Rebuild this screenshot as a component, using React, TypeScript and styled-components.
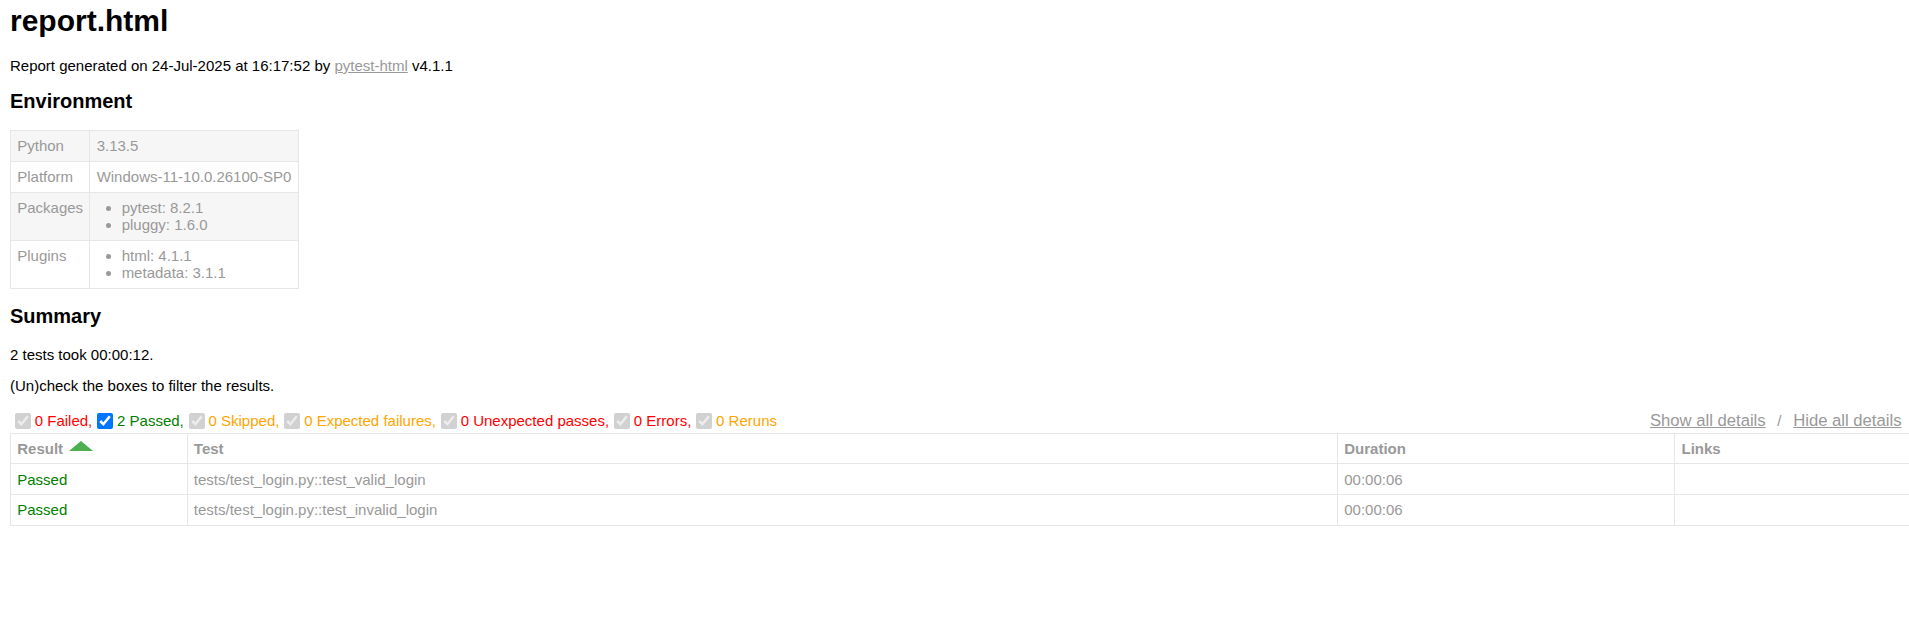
import React from "react";
import styled, { createGlobalStyle } from "styled-components";

const GlobalStyle = createGlobalStyle`
  html, body {
    margin: 0;
    padding: 0;
    background: #fff;
    overflow: hidden;
  }
  body {
    font-family: "Liberation Sans", Arial, Helvetica, sans-serif;
    font-size: 15px;
    color: #999;
  }
`;

const Page = styled.div`
  padding: 4px 0 20px 10px;
  overflow: hidden;
`;

const Title = styled.h1`
  margin: 0;
  font-size: 30px;
  line-height: 34px;
  font-weight: bold;
  color: #000;
`;

const Para = styled.p<{ $mt: number }>`
  margin: ${(p) => p.$mt}px 0 0;
  font-size: 15px;
  line-height: 17px;
  color: #000;
`;

const Link = styled.a`
  color: #999;
  text-decoration: underline;
`;

const Heading = styled.h2<{ $mt: number }>`
  margin: ${(p) => p.$mt}px 0 0;
  font-size: 20px;
  line-height: 23px;
  font-weight: bold;
  color: #000;
`;

const EnvTable = styled.table`
  margin-top: 17px;
  border-collapse: collapse;
  font-size: 15px;
  line-height: 17.25px;
  color: #999;
`;

const EnvRow = styled.tr`
  &:nth-child(odd) {
    background-color: #f6f6f6;
  }
`;

const EnvCell = styled.td`
  padding: 6.25px;
  border: 1px solid #e6e6e6;
  vertical-align: top;
  text-align: left;
`;

const EnvList = styled.ul`
  margin: 0;
  padding: 0 25px;
`;

const Controls = styled.div`
  margin-top: 15px;
  display: flex;
  justify-content: space-between;
  align-items: center;
`;

const Filters = styled.div`
  display: flex;
  align-items: center;
  font-size: 15px;
  line-height: 17.25px;
`;

const FilterBox = styled.input`
  width: 16px;
  height: 16px;
  margin: 3.75px 3.75px 3.75px 5px;
`;

const FilterLabel = styled.span<{ $c: string }>`
  color: ${(p) => p.$c};
`;

const Collapse = styled.div`
  display: flex;
  align-items: center;
  font-size: 16.67px;
  color: #999;
`;

const CollapseButton = styled.button`
  font-family: "Liberation Sans", Arial, sans-serif;
  font-size: 16.67px;
  color: #999;
  background: none;
  border: none;
  padding: 1.25px 7.5px;
  text-decoration: underline;
  cursor: pointer;
`;

const Sep = styled.span`
  font-size: 15px;
`;

const ResultsTable = styled.table`
  width: calc(100% + 4px);
  border-collapse: collapse;
  table-layout: fixed;
  font-size: 15px;
  line-height: 17.25px;
  color: #999;
`;

const Col = styled.col<{ $w: number }>`
  width: ${(p) => p.$w}px;
`;

const HeadCell = styled.th`
  padding: 6.25px;
  border: 1px solid #e6e6e6;
  text-align: left;
  font-weight: bold;
`;

const SortArrow = styled.span`
  display: inline-block;
  width: 0;
  height: 0;
  margin-left: 6px;
  vertical-align: 3px;
  border-left: 12px solid transparent;
  border-right: 12px solid transparent;
  border-bottom: 10.5px solid #4caf50;
`;

const Cell = styled.td<{ $c?: string }>`
  padding: 6.25px;
  border: 1px solid #e6e6e6;
  text-align: left;
  color: ${(p) => p.$c || "#999"};
`;

const env: [string, string | string[]][] = [
  ["Python", "3.13.5"],
  ["Platform", "Windows-11-10.0.26100-SP0"],
  ["Packages", ["pytest: 8.2.1", "pluggy: 1.6.0"]],
  ["Plugins", ["html: 4.1.1", "metadata: 3.1.1"]],
];

const filters = [
  { label: "0 Failed,", color: "#ff0000", disabled: true },
  { label: "2 Passed,", color: "#008000", disabled: false },
  { label: "0 Skipped,", color: "#ffa500", disabled: true },
  { label: "0 Expected failures,", color: "#ffa500", disabled: true },
  { label: "0 Unexpected passes,", color: "#ff0000", disabled: true },
  { label: "0 Errors,", color: "#ff0000", disabled: true },
  { label: "0 Reruns", color: "#ffa500", disabled: true },
];

const results = [
  { test: "tests/test_login.py::test_valid_login", duration: "00:00:06" },
  { test: "tests/test_login.py::test_invalid_login", duration: "00:00:06" },
];

export default function App() {
  return (
    <>
      <GlobalStyle />
      <Page>
        <Title>report.html</Title>
        <Para $mt={19}>
          Report generated on 24-Jul-2025 at 16:17:52 by <Link href="#">pytest-html</Link> v4.1.1
        </Para>
        <Heading $mt={16}>Environment</Heading>
        <EnvTable>
          <tbody>
            {env.map(([k, v]) => (
              <EnvRow key={k}>
                <EnvCell>{k}</EnvCell>
                <EnvCell>
                  {Array.isArray(v) ? (
                    <EnvList>
                      {v.map((item) => (
                        <li key={item}>{item}</li>
                      ))}
                    </EnvList>
                  ) : (
                    v
                  )}
                </EnvCell>
              </EnvRow>
            ))}
          </tbody>
        </EnvTable>
        <Heading $mt={16}>Summary</Heading>
        <Para $mt={18}>2 tests took 00:00:12.</Para>
        <Para $mt={14.5}>(Un)check the boxes to filter the results.</Para>
        <Controls>
          <Filters>
            {filters.map((f) => (
              <React.Fragment key={f.label}>
                <FilterBox type="checkbox" defaultChecked disabled={f.disabled} />
                <FilterLabel $c={f.color}>{f.label}</FilterLabel>
              </React.Fragment>
            ))}
          </Filters>
          <Collapse>
            <CollapseButton>Show all details</CollapseButton>
            <Sep>&nbsp;/&nbsp;</Sep>
            <CollapseButton>Hide all details</CollapseButton>
          </Collapse>
        </Controls>
        <ResultsTable>
          <colgroup>
            <Col $w={176.6} />
            <Col $w={1150.4} />
            <Col $w={337.3} />
            <Col $w={240} />
          </colgroup>
          <thead>
            <tr>
              <HeadCell>
                Result
                <SortArrow />
              </HeadCell>
              <HeadCell>Test</HeadCell>
              <HeadCell>Duration</HeadCell>
              <HeadCell>Links</HeadCell>
            </tr>
          </thead>
          <tbody>
            {results.map((r) => (
              <tr key={r.test}>
                <Cell $c="#008000">Passed</Cell>
                <Cell>{r.test}</Cell>
                <Cell>{r.duration}</Cell>
                <Cell></Cell>
              </tr>
            ))}
          </tbody>
        </ResultsTable>
      </Page>
    </>
  );
}
